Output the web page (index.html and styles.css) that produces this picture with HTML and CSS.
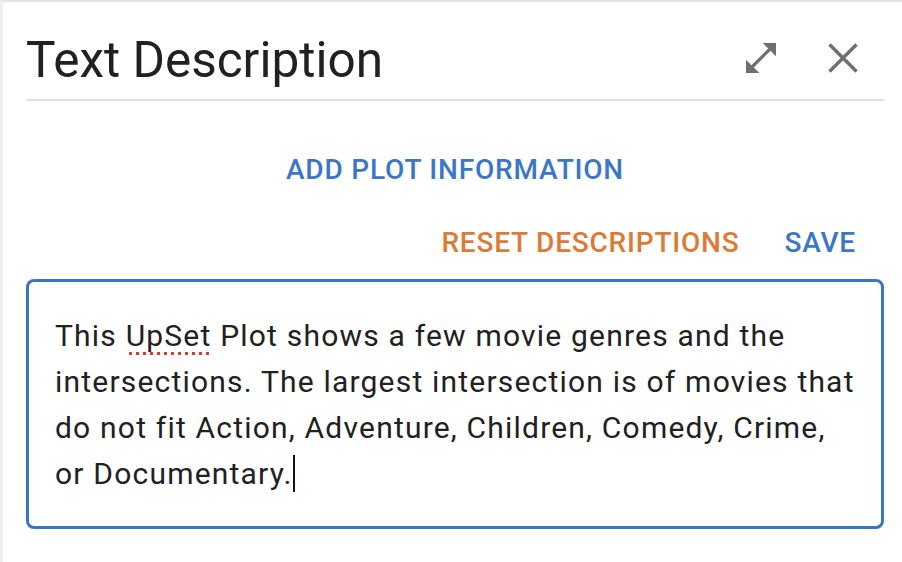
FILE: index.html
```html
<!DOCTYPE html>
<html lang="en">
<head>
<meta charset="utf-8">
<title>Text Description</title>
<link rel="stylesheet" href="styles.css">
</head>
<body>
<div class="panel">
  <header class="head">
    <h1 class="title">Text Description</h1>
    <div class="tools">
      <button class="icon-btn" aria-label="Expand">
        <svg class="ic" viewBox="3 3 18 18" width="30" height="30"><path fill="#6f6f6f" d="M21 11V3h-8l3.29 3.29-10 10L3 13v8h8l-3.29-3.29 10-10z"/></svg>
      </button>
      <button class="icon-btn" aria-label="Close">
        <svg class="ic" viewBox="0 0 30 30" width="30" height="30"><path stroke="#6f6f6f" stroke-width="3.4" d="M1.5 1.5L28.5 28.5M28.5 1.5L1.5 28.5"/></svg>
      </button>
    </div>
  </header>
  <div class="add-row">
    <button class="btn blue">ADD PLOT INFORMATION</button>
  </div>
  <div class="actions">
    <button class="btn orange">RESET DESCRIPTIONS</button>
    <button class="btn blue save">SAVE</button>
  </div>
  <div class="editor">
    <div class="line">This <span class="spell">UpSet</span> Plot shows a few movie genres and the</div>
    <div class="line">intersections. The largest intersection is of movies that</div>
    <div class="line">do not fit Action, Adventure, Children, Comedy, Crime,</div>
    <div class="line">or Documentary.<span class="caret"></span></div>
  </div>
</div>
</body>
</html>
```

FILE: styles.css
```css
html, body {
  margin: 0;
  padding: 0;
  background: #ffffff;
}
body {
  width: 902px;
  height: 562px;
  box-sizing: border-box;
  border-top: 2px solid #e4e4e4;
  border-left: 3px solid #eef0f3;
  font-family: Roboto, "Noto Sans", Arial, sans-serif;
  color: #212121;
  overflow: hidden;
}
.panel {
  margin-left: 23px;
  width: 858px;
}
.head {
  display: flex;
  align-items: center;
  padding-top: 29px;
  padding-bottom: 10px;
  border-bottom: 2px solid #e0e0e0;
}
.title {
  flex: 1;
  margin: 0;
  font-size: 49.5px;
  line-height: 58px;
  font-weight: 400;
  color: #212121;
}
.tools {
  display: flex;
  align-items: center;
  gap: 52px;
  padding-right: 26px;
  padding-bottom: 5px;
}
.icon-btn {
  border: 0;
  background: none;
  padding: 0;
  margin: 0;
  width: 30px;
  height: 30px;
  display: block;
}
.ic {
  display: block;
}
.btn {
  border: 0;
  background: none;
  padding: 0;
  margin: 0;
  font-family: Roboto, "Noto Sans", Arial, sans-serif;
  font-size: 28px;
  line-height: 28px;
  font-weight: 500;
  letter-spacing: 0.8px;
}
.blue { color: #3b77c4; }
.orange { color: #dd7a34; }
.add-row {
  display: flex;
  justify-content: center;
  padding-top: 55px;
}
.actions {
  display: flex;
  justify-content: flex-end;
  gap: 45px;
  padding-top: 45px;
  padding-right: 28px;
}
.editor {
  margin-top: 22px;
  height: 250px;
  box-sizing: border-box;
  border: 3px solid #3a75c4;
  border-radius: 8px;
  padding: 31px 10px 0 26px;
  font-size: 30px;
  line-height: 46px;
  letter-spacing: 1.2px;
  color: #212121;
}
.line {
  white-space: nowrap;
}
.spell {
  position: relative;
}
.spell::after {
  content: "";
  position: absolute;
  left: 1px;
  right: 0;
  bottom: -2px;
  height: 3px;
  background-image: radial-gradient(circle, #d9342b 1.4px, transparent 1.6px);
  background-size: 7px 3px;
  background-repeat: repeat-x;
}
.caret {
  display: inline-block;
  width: 2px;
  height: 37px;
  background: #111;
  vertical-align: -8px;
  margin-left: 0;
}
```
